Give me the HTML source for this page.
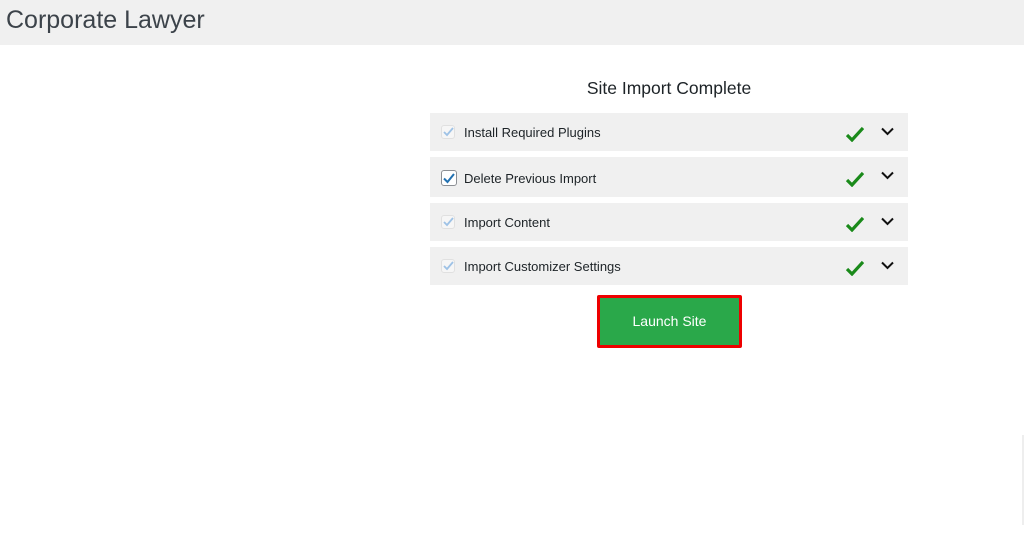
<!DOCTYPE html>
<html><head><style>
body{margin:0;width:1024px;height:550px;background:#fff;font-family:"Liberation Sans",sans-serif;position:relative;overflow:hidden}
.hdr{position:absolute;left:0;top:0;width:1024px;height:45px;background:#f0f0f0}
.hdr span{position:absolute;left:6px;top:6px;font-size:25px;color:#3c434a}
h2{position:absolute;left:430px;width:478px;top:78px;margin:0;text-align:center;font-size:17.5px;font-weight:normal;color:#1d2327}
.row{position:absolute;left:430px;width:478px;height:38px;background:#f0f0f0}
.row .t{position:absolute;left:34px;top:12px;font-size:13px;color:#1d2327}
.cb{position:absolute;left:11px;top:12px;width:14px;height:14px;border-radius:3px;box-sizing:border-box}
.cb.d{border:1px solid #e0e0e0;background:#f6f6f6}
.cb.a{border:1px solid #8c8f94;background:#fff}
.row svg{position:absolute}
.btn{position:absolute;left:597px;top:295px;width:145px;height:53px;box-sizing:border-box;border:3px solid #e00;border-radius:2px;background:#2aa84a;color:#fff;font-size:14px;text-align:center;line-height:47px}
.sb{position:absolute;left:1022px;top:435px;width:2px;height:90px;background:#eee}
</style></head><body>
<div class="hdr"><span>Corporate Lawyer</span></div>
<h2>Site Import Complete</h2>
<div class="row" style="top:113px"><div class="cb d"></div><svg style="left:13px;top:14px" width="11" height="10" viewBox="0 0 11 10"><path d="M1 5l3 3 6-7" stroke="#9ec2e6" stroke-width="1.8" fill="none"/></svg><span class="t">Install Required Plugins</span><svg style="left:416px;top:13px" width="18" height="16" viewBox="0 0 18 16"><path d="M1 9l5 5L17 2" stroke="#1a8a1a" stroke-width="3.2" fill="none"/></svg><svg style="left:451px;top:14px" width="13" height="9" viewBox="0 0 13 9"><path d="M1 1.5l5.5 5.5 5.5-5.5" stroke="#111" stroke-width="2" fill="none"/></svg></div>
<div class="row" style="top:157px;height:40px"><div class="cb a" style="top:13px;width:16px;height:16px"></div><svg style="left:13px;top:16px" width="12" height="11" viewBox="0 0 12 11"><path d="M1 5.5l3.5 3.5 6.5-8" stroke="#2271b1" stroke-width="2" fill="none"/></svg><span class="t" style="top:14px">Delete Previous Import</span><svg style="left:416px;top:14px" width="18" height="16" viewBox="0 0 18 16"><path d="M1 9l5 5L17 2" stroke="#1a8a1a" stroke-width="3.2" fill="none"/></svg><svg style="left:451px;top:14px" width="13" height="9" viewBox="0 0 13 9"><path d="M1 1.5l5.5 5.5 5.5-5.5" stroke="#111" stroke-width="2" fill="none"/></svg></div>
<div class="row" style="top:203px"><div class="cb d"></div><svg style="left:13px;top:14px" width="11" height="10" viewBox="0 0 11 10"><path d="M1 5l3 3 6-7" stroke="#9ec2e6" stroke-width="1.8" fill="none"/></svg><span class="t">Import Content</span><svg style="left:416px;top:13px" width="18" height="16" viewBox="0 0 18 16"><path d="M1 9l5 5L17 2" stroke="#1a8a1a" stroke-width="3.2" fill="none"/></svg><svg style="left:451px;top:14px" width="13" height="9" viewBox="0 0 13 9"><path d="M1 1.5l5.5 5.5 5.5-5.5" stroke="#111" stroke-width="2" fill="none"/></svg></div>
<div class="row" style="top:247px"><div class="cb d"></div><svg style="left:13px;top:14px" width="11" height="10" viewBox="0 0 11 10"><path d="M1 5l3 3 6-7" stroke="#9ec2e6" stroke-width="1.8" fill="none"/></svg><span class="t">Import Customizer Settings</span><svg style="left:416px;top:13px" width="18" height="16" viewBox="0 0 18 16"><path d="M1 9l5 5L17 2" stroke="#1a8a1a" stroke-width="3.2" fill="none"/></svg><svg style="left:451px;top:14px" width="13" height="9" viewBox="0 0 13 9"><path d="M1 1.5l5.5 5.5 5.5-5.5" stroke="#111" stroke-width="2" fill="none"/></svg></div>
<div class="btn">Launch Site</div>
<div class="sb"></div>
</body></html>
